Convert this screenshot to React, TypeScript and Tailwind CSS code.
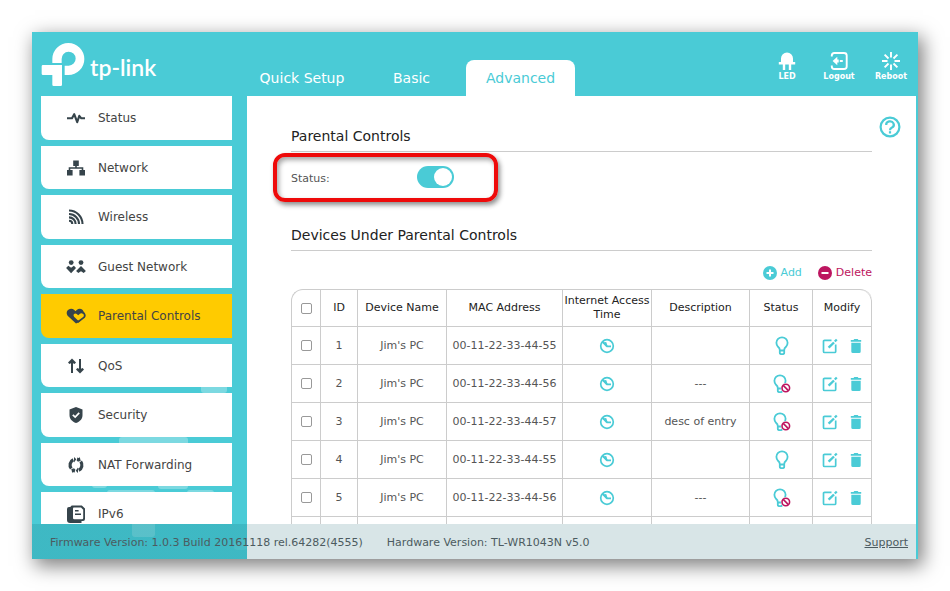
import type { ReactNode } from "react";

type Device = {
  id: number;
  name: string;
  mac: string;
  description: string;
  enabled: boolean;
};

const devices: Device[] = [
  { id: 1, name: "Jim's PC", mac: "00-11-22-33-44-55", description: "", enabled: true },
  { id: 2, name: "Jim's PC", mac: "00-11-22-33-44-56", description: "---", enabled: false },
  { id: 3, name: "Jim's PC", mac: "00-11-22-33-44-57", description: "desc of entry", enabled: false },
  { id: 4, name: "Jim's PC", mac: "00-11-22-33-44-55", description: "", enabled: true },
  { id: 5, name: "Jim's PC", mac: "00-11-22-33-44-56", description: "---", enabled: false },
];

function LogoMark() {
  return (
    <svg viewBox="63 66 135 135" className="size-[45px] shrink-0" fill="currentColor" aria-hidden="true">
      <path d="M97 129V117a48 48 0 1 1 48 48H134V137H146A21 21 0 1 0 125 117V129Z" />
      <path d="M69 135H126V194q0 4-4 4H101q-4 0-4-4V165H69q-4 0-4-4V139q0-4 4-4Z" />
    </svg>
  );
}

function LedIcon() {
  return (
    <svg viewBox="0 0 18 18" className="size-[18px]" fill="currentColor" aria-hidden="true">
      <path d="M3 6.500a6 6 0 0 1 12 0V10h2.200v2.500H.8V10H3ZM4.800 12.500h2.400V18H4.800ZM10.800 12.500h2.400V18h-2.400Z" />
    </svg>
  );
}

function LogoutIcon() {
  return (
    <svg viewBox="0 0 18 18" className="size-[18px]" fill="none" stroke="currentColor" strokeWidth="1.900" aria-hidden="true">
      <path d="M1.800 4.500V3.500Q1.800 1 4.300 1H14q2.700 0 2.700 2.500v11Q16.700 17 14 17H4.300Q1.800 17 1.800 14.500V13.500" />
      <path d="M12.800 9h-3" />
      <path d="M7.300 4.800 2.600 9l4.700 4.200V10.500h1.400v-3H7.300Z" fill="currentColor" stroke="none" />
    </svg>
  );
}

function RebootIcon() {
  return (
    <svg viewBox="0 0 18 18" className="size-[18px]" fill="none" stroke="currentColor" strokeWidth="1.900" aria-hidden="true">
      <path d="M9 0v5.500M9 12.500V18M0 9h5.500M12.500 9H18M2.600 2.600l3.900 3.900M11.500 11.500l3.900 3.900M15.400 2.600l-3.900 3.900M6.500 11.500l-3.900 3.900" />
    </svg>
  );
}

function HelpIcon() {
  return (
    <svg viewBox="0 0 22 22" className="size-[22px]" fill="none" stroke="currentColor" strokeWidth="2.200" aria-hidden="true">
      <circle cx="11" cy="11" r="9.400" />
      <path d="M7.200 9a3.800 3.400 0 1 1 5.800 2.600Q11 12.600 11 14.200" />
      <path d="M11 15.200v2.300" />
    </svg>
  );
}

function MenuIcon(props: { children: ReactNode }) {
  return (
    <svg viewBox="0 0 20 20" className="size-5 shrink-0 text-[#36444b]" fill="currentColor" aria-hidden="true">
      {props.children}
    </svg>
  );
}

const menu: { label: string; icon: ReactNode; active?: boolean }[] = [
  {
    label: "Status",
    icon: (
      <path
        d="M1 10.300H6L8.200 6.200 11.200 14.200 13.300 7.800l2 2.500H19"
        fill="none"
        stroke="currentColor"
        strokeWidth="2.100"
        strokeLinejoin="round"
      />
    ),
  },
  {
    label: "Network",
    icon: (
      <>
        <path d="M7.200 2.500h5.600V8H7.200ZM1 12h5.600v5.500H1ZM13.400 12H19v5.500h-5.600Z" />
        <path d="M10 7v3M3.500 13V10h13v3" fill="none" stroke="currentColor" strokeWidth="1.600" />
      </>
    ),
  },
  {
    label: "Wireless",
    icon: (
      <path
        d="M3 3.500A13.500 13.500 0 0 1 16.500 17M3 7A10 10 0 0 1 13 17M3 10.400A6.600 6.600 0 0 1 9.600 17M3 13.800A3.300 3.300 0 0 1 6.300 17"
        fill="none"
        stroke="currentColor"
        strokeWidth="2.100"
      />
    ),
  },
  {
    label: "Guest Network",
    icon: (
      <>
        <circle cx="5.200" cy="5.600" r="2.400" />
        <circle cx="15" cy="5.600" r="2.400" />
        <path d="m.1 11 2.200-2.200 2.800 2 2.800-2L10 11l-4.900 5.200ZM15 9l4.900 4.900-2.200 2.200-2.700-1.800-2.700 1.800-2.200-2.200Z" />
      </>
    ),
  },
  {
    label: "Parental Controls",
    active: true,
    icon: (
      <>
        <path d="M10 17.500 1.600 9.700A4.600 4.600 0 0 1 1.700 4.300 4.700 4.700 0 0 1 8.300 4L9.500 5.200 10.700 4a4.700 4.700 0 0 1 6 0L19 8l-6 8Z" />
        <path
          d="M12.200 15.800 7.500 11.400Q5.800 9.200 7.400 7.400q2-1.800 4 0l.8.800.8-.8q2-1.800 4.700-.2 2 2 .3 4.200Z"
          fill="#ffcb00"
          stroke="#36444b"
          strokeWidth="1.800"
          strokeLinejoin="round"
        />
      </>
    ),
  },
  {
    label: "QoS",
    icon: (
      <>
        <path d="M6 2.500 10 6.500 8.600 8 6 6.800 3.400 8 2 6.500ZM14 17.500l4-4-1.400-1.500L14 13.200 11.400 12 10 13.500Z" />
        <path d="M6 5v12M14 3v12" fill="none" stroke="currentColor" strokeWidth="2" />
      </>
    ),
  },
  {
    label: "Security",
    icon: (
      <>
        <path d="m10 2 6.500 2.500V10c0 4-2.500 6.500-6.500 8-4-1.500-6.500-4-6.500-8V4.500Z" />
        <path d="m6.800 9.800 2.400 2.300 4-4.200" fill="none" stroke="#fff" strokeWidth="1.700" />
      </>
    ),
  },
  {
    label: "NAT Forwarding",
    icon: (
      <>
        <path
          d="M7.300 4.700A5.900 5.900 0 0 0 5.300 13.600M12.700 15.300A5.900 5.900 0 0 0 14.700 6.400M11 4.100A5.900 5.900 0 0 1 13 4.900M9 15.900A5.900 5.900 0 0 1 7 15.100"
          fill="none"
          stroke="currentColor"
          strokeWidth="3.200"
        />
        <path d="M8 2 10.300 4.300 8 7.500ZM12 12.500V18L9.700 15.700ZM13.700 1.800l1 4.300-3.200.6ZM6.300 18.200l-1-4.300 3.200-.6Z" />
      </>
    ),
  },
  {
    label: "IPv6",
    icon: (
      <>
        <path d="M6 1.500h9.800L19 4.500V15q0 2-2 2h-1.500v2H4Q1 19 1 16V5Q1 3 3 3h1.500Q4.500 1.500 6 1.500Z" />
        <path d="M7.800 3.500H15L17.200 5.700V14q0 1.200-1.200 1.200H8.300Q7 15.200 7 14V4.300Q7 3.500 7.800 3.500Z" fill="#fff" />
        <path d="M9 6.800h3.600M9 10.300h6" stroke="currentColor" strokeWidth="1.500" />
      </>
    ),
  },
];

function ClockIcon() {
  return (
    <svg viewBox="0 0 16 16" className="size-4" fill="none" stroke="currentColor" strokeWidth="1.700" aria-hidden="true">
      <circle cx="8" cy="8" r="6.300" />
      <path d="M3.500 3.800 8 8.300h4" />
      <path d="M3.500 4.500 7.200 4 8.800 8.500H7Z" fill="currentColor" stroke="none" />
    </svg>
  );
}

function BulbIcon(props: { enabled: boolean }) {
  return (
    <svg viewBox="0 0 18 20" className="h-5 w-[18px]" fill="none" stroke="currentColor" strokeWidth="1.800" aria-hidden="true">
      <g transform={props.enabled ? undefined : "translate(-2 0)"}>
        <path d="M6.800 14Q6.800 12.200 5 10.800a5.600 5.600 0 1 1 8 0Q11.200 12.200 11.200 14v3q0 1.200-2.200 1.200T6.800 17ZM6.800 14.500h4.400" />
      </g>
      {props.enabled ? null : (
        <g>
          <circle cx="12.800" cy="14" r="5" fill="#fff" stroke="none" />
          <circle cx="12.800" cy="14" r="3.800" stroke="#bd1560" strokeWidth="1.600" />
          <path d="m10.200 11.400 5.200 5.200" stroke="#bd1560" strokeWidth="1.600" />
        </g>
      )}
    </svg>
  );
}

function EditIcon() {
  return (
    <svg viewBox="0 0 16 16" className="size-4" fill="none" stroke="currentColor" strokeWidth="1.700" aria-hidden="true">
      <path d="M9.500 2.300H2.600Q1.500 2.300 1.500 3.400v10Q1.500 14.500 2.600 14.500H12.600q1.100 0 1.100-1.100V6.500" />
      <path d="m6.600 9.700 5.400-5.200" strokeWidth="2.400" />
      <path d="m12.800 3.500 2-2" strokeWidth="2.200" />
    </svg>
  );
}

function TrashIcon() {
  return (
    <svg viewBox="0 0 12 16" className="h-4 w-3" fill="currentColor" aria-hidden="true">
      <path d="M.8 2H3.500L4.300 1h3.400l.8 1h2.700v1.800H.8ZM1.300 4.800h9.400v8.700q0 1.500-1.500 1.500H2.800q-1.500 0-1.500-1.500Z" />
    </svg>
  );
}

function RoundIcon(props: { d: string }) {
  return (
    <svg viewBox="0 0 14 14" className="size-3.5" aria-hidden="true">
      <circle cx="7" cy="7" r="7" fill="currentColor" />
      <path d={props.d} stroke="#fff" strokeWidth="2" />
    </svg>
  );
}

// Soft blocks that show between the menu entries and under the footer
function Backdrop() {
  return (
    <svg
      viewBox="32 380 215 179"
      className="pointer-events-none absolute bottom-0 left-0 h-[179px] w-[215px]"
      fill="#fff"
      fillOpacity="0.280"
      aria-hidden="true"
    >
      <rect x="201" y="380" width="26" height="13" rx="3" />
      <rect x="119" y="437" width="69" height="20" rx="3" />
      <rect x="92" y="470" width="15" height="18" rx="3" />
      <rect x="107" y="490" width="48" height="20" rx="3" />
      <rect x="158" y="470" width="30" height="19" rx="3" />
      <rect x="187" y="490" width="27" height="20" rx="3" />
      <rect x="132" y="514" width="23" height="23" rx="3" fillOpacity="0.180" />
      <rect x="234" y="540" width="13" height="10" rx="3" fillOpacity="0.080" />
    </svg>
  );
}

function HeaderAction(props: { label: string; icon: ReactNode }) {
  return (
    <button type="button" className="flex w-[52px] flex-col items-center gap-0.5 text-[8px] leading-[10px] font-bold">
      {props.icon}
      {props.label}
    </button>
  );
}

function Header() {
  return (
    <header className="relative -mr-px flex h-16 shrink-0 text-white">
      <a href="#home" className="flex w-[215px] items-start gap-1 pt-2.5 pl-[9px]">
        <LogoMark />
        <span className="font-[Lato,sans-serif] text-[23px] leading-[50px] font-semibold">tp-link</span>
      </a>
      <nav className="flex flex-1 items-end text-center text-[14px] leading-9">
        <a href="#quick" className="w-[110px]">Quick Setup</a>
        <a href="#basic" className="w-[109px]">Basic</a>
        <a href="#advanced" className="w-[109px] rounded-t-lg bg-white text-[#4acbd6]">Advanced</a>
      </nav>
      <div className="flex items-start pt-5">
        <HeaderAction label="LED" icon={<LedIcon />} />
        <HeaderAction label="Logout" icon={<LogoutIcon />} />
        <HeaderAction label="Reboot" icon={<RebootIcon />} />
      </div>
    </header>
  );
}

function Sidebar() {
  return (
    <nav className="relative w-[215px] shrink-0 pr-[15px] pl-[9px]">
      <ul className="flex flex-col gap-1.5">
        {menu.map((item) => (
          <li key={item.label} className="odd:h-11 even:h-[43px]">
            <a
              href="#menu"
              className={
                item.active
                  ? "flex h-full items-center gap-3 rounded-bl-lg bg-[#ffcb00] pl-[25px] text-[12px] text-[#444]"
                  : "flex h-full items-center gap-3 rounded-bl-lg bg-white pl-[25px] text-[12px] text-[#444]"
              }
            >
              <MenuIcon>{item.icon}</MenuIcon>
              {item.label}
            </a>
          </li>
        ))}
      </ul>
    </nav>
  );
}

const th = "border-r border-b border-[#ccc] p-0 font-normal text-[#222]";
const td = "border-r border-b border-[#ccc] p-0";
const box = "block mx-auto size-[11px] appearance-none rounded-xs border border-[#999] bg-white checked:bg-[#4acbd6]";

function DeviceTable() {
  return (
    <div className="overflow-hidden rounded-t-xl border-t border-l border-[#ccc]">
      <table className="w-full table-fixed border-separate border-spacing-0 text-center text-[11px] leading-[14px] text-[#555]">
        <colgroup>
          <col className="w-[29px]" />
          <col className="w-[37px]" />
          <col className="w-[89px]" />
          <col className="w-[116px]" />
          <col className="w-[89px]" />
          <col />
          <col className="w-[63px]" />
          <col className="w-[59px]" />
        </colgroup>
        <thead>
          <tr className="h-[37px]">
            <th className={th}>
              <input type="checkbox" aria-label="Select all" className={box} />
            </th>
            <th className={th}>ID</th>
            <th className={th}>Device Name</th>
            <th className={th}>MAC Address</th>
            <th className={th}>Internet Access Time</th>
            <th className={th}>Description</th>
            <th className={th}>Status</th>
            <th className="rounded-tr-xl border-r border-b border-[#ccc] p-0 font-normal text-[#222]">Modify</th>
          </tr>
        </thead>
        <tbody>
          {devices.map((device) => (
            <tr key={device.id} className="h-[38px]">
              <td className={td}>
                <input type="checkbox" aria-label={`Select device ${device.id}`} className={box} />
              </td>
              <td className={td}>{device.id}</td>
              <td className={td}>{device.name}</td>
              <td className={td}>{device.mac}</td>
              <td className={td}>
                <button type="button" aria-label="Access time" className="mx-auto block text-[#4acbd6]">
                  <ClockIcon />
                </button>
              </td>
              <td className={td}>{device.description}</td>
              <td className={td}>
                <button type="button" aria-label="Toggle device" className="mx-auto block pl-0.5 text-[#4acbd6]">
                  <BulbIcon enabled={device.enabled} />
                </button>
              </td>
              <td className={td}>
                <div className="flex items-center justify-center gap-3 text-[#4acbd6]">
                  <button type="button" aria-label="Edit">
                    <EditIcon />
                  </button>
                  <button type="button" aria-label="Remove">
                    <TrashIcon />
                  </button>
                </div>
              </td>
            </tr>
          ))}
          <tr className="h-[38px]">
            <td className={td} />
            <td className={td} />
            <td className={td} />
            <td className={td} />
            <td className={td} />
            <td className={td} />
            <td className={td} />
            <td className={td} />
          </tr>
        </tbody>
      </table>
    </div>
  );
}

function Content() {
  return (
    <main className="relative min-w-0 flex-1 overflow-hidden bg-white px-11 pt-7">
      <h2 className="border-b border-[#ccc] pb-0.5 text-[14px] leading-[25px] text-[#222]">Parental Controls</h2>
      <button type="button" aria-label="Help" className="absolute top-5 right-[15px] text-[#4acbd6]">
        <HelpIcon />
      </button>

      <div className="relative flex h-[50px] items-center text-[11px] text-[#555]">
        {/* Highlight frame around the switch */}
        <div className="pointer-events-none absolute top-px -left-[18px] h-[49px] w-[225px] rounded-xl border-4 border-[#ee0a0a] shadow-[2px_3px_5px_rgba(0,0,0,0.45),inset_2px_3px_5px_rgba(0,0,0,0.35)]" />
        <label htmlFor="parental-status" className="w-[126px] pt-1">
          Status:
        </label>
        <input
          id="parental-status"
          type="checkbox"
          role="switch"
          defaultChecked
          className="flex h-[22px] w-[37px] appearance-none items-center rounded-full bg-[#ccc] px-0.5 before:size-[18px] before:rounded-full before:bg-white checked:justify-end checked:bg-[#4acbd6]"
        />
      </div>

      <h2 className="mt-[21px] border-b border-[#ccc] pb-0.5 text-[14px] leading-[25px] text-[#222]">
        Devices Under Parental Controls
      </h2>

      <div className="flex h-[38px] items-center justify-end gap-4 pt-1.5 text-[11px]">
        <button type="button" className="flex items-center gap-1 text-[#4acbd6]">
          <RoundIcon d="M7 3.500v7M3.500 7h7" />
          Add
        </button>
        <button type="button" className="flex items-center gap-1 text-[#bd1560]">
          <RoundIcon d="M3.500 7h7" />
          Delete
        </button>
      </div>

      <DeviceTable />
    </main>
  );
}

function Footer() {
  return (
    <footer className="relative flex h-[35px] shrink-0 items-center gap-6 bg-[linear-gradient(to_right,rgba(0,86,97,0.155)_215px,#d8e5e7_215px)] pt-1 pr-2 pl-[18px] text-[11px] text-[#4c5b60]">
      <span>Firmware Version: 1.0.3 Build 20161118 rel.64282(4555)</span>
      <span>Hardware Version: TL-WR1043N v5.0</span>
      <a href="#support" className="ml-auto underline">
        Support
      </a>
    </footer>
  );
}

export default function App() {
  return (
    <div className="flex h-screen bg-white p-8 font-['DejaVu_Sans',sans-serif]">
      <div className="relative flex min-w-0 flex-1 flex-col bg-[#4acbd6] pr-0.5 shadow-[4px_6px_18px_1px_rgba(0,0,0,0.5)]">
        <Backdrop />
        <Header />
        <div className="flex min-h-0 flex-1 overflow-hidden">
          <Sidebar />
          <Content />
        </div>
        <Footer />
      </div>
    </div>
  );
}
